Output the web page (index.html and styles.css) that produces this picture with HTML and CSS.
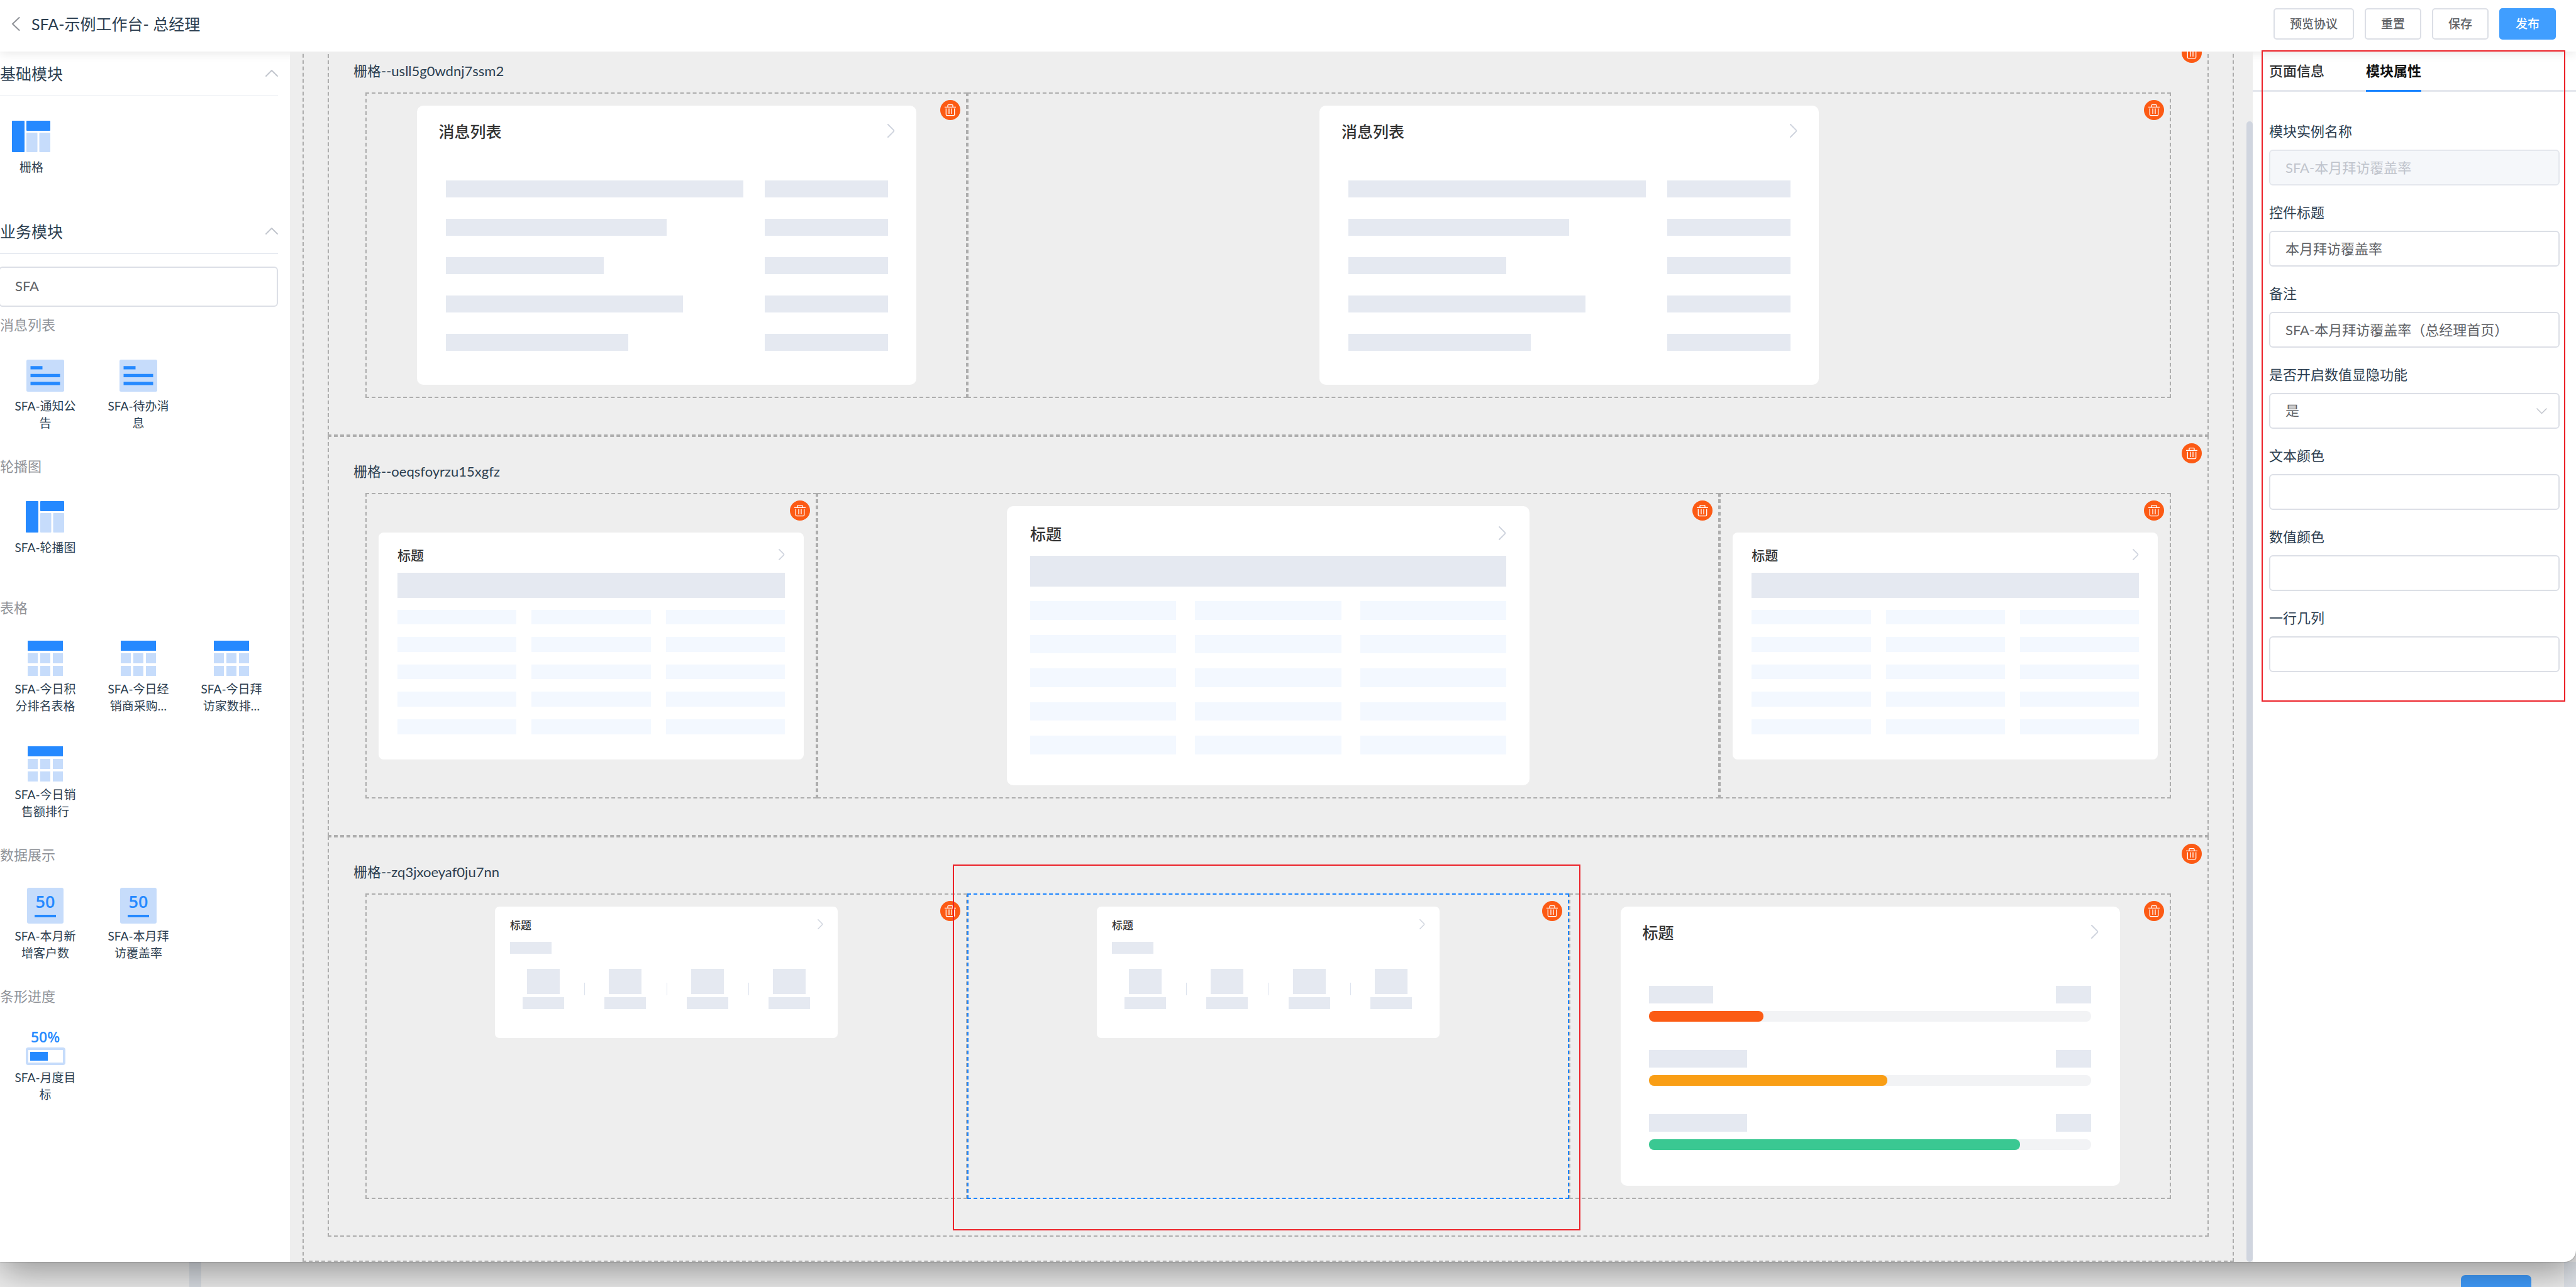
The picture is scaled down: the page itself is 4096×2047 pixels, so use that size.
FILE: index.html
```html
<!DOCTYPE html>
<html lang="zh-CN">
<head>
<meta charset="utf-8">
<title>SFA-示例工作台- 总经理</title>
<link rel="stylesheet" href="styles.css">
</head>
<body>
<svg class="sprite" aria-hidden="true">
  <symbol id="i-trash" viewBox="0 0 20 20"><path d="M1 5.300h18M6 5V2.600a1 1 0 0 1 1-1h6a1 1 0 0 1 1 1V5M3.300 7.500v9.600a1.600 1.600 0 0 0 1.600 1.600h10.200a1.600 1.600 0 0 0 1.600-1.600V7.500M8 7.500v8.500M12 7.500v8.500" fill="none" stroke="#fff" stroke-width="1.300"/></symbol>
  <symbol id="i-next" viewBox="0 0 12 22"><path d="M1 1l8.600 8.600a2 2 0 0 1 0 2.800L1 21" fill="none" stroke="#cfd4de" stroke-width="2" stroke-linecap="round"/></symbol>
  <symbol id="i-up" viewBox="0 0 20 12"><path d="M1 11l9-9 9 9" fill="none" stroke="#c0c4cc" stroke-width="1.800" stroke-linecap="round" stroke-linejoin="round"/></symbol>
  <symbol id="i-grid" viewBox="0 0 62 50"><rect width="20" height="50" rx="1" fill="#2589ff"/><rect x="23" width="38" height="16" rx="1" fill="#2589ff"/><rect x="23" y="19" width="17.500" height="31" rx="1" fill="#c6dcfb"/><rect x="43.500" y="19" width="17.500" height="31" rx="1" fill="#c6dcfb"/></symbol>
  <symbol id="i-list" viewBox="0 0 60 51"><rect width="60" height="51" rx="2.500" fill="#c6dcfb"/><path d="M6.500 12.800h19M6.500 25.300h47M6.500 37.800h47" stroke="#2589ff" stroke-width="5.200"/></symbol>
  <symbol id="i-table" viewBox="0 0 56 56"><path d="M0 0h56v16H0z" fill="#2589ff"/><path d="M0 20h16v16H0zM20 20h16v16H20zM40 20h16v16H40zM0 40h16v16H0zM20 40h16v16H20zM40 40h16v16H40z" fill="#c6dcfb"/></symbol>
</svg>

<div class="app">
  <header class="topbar">
    <button class="back" aria-label="返回"><svg width="14" height="22" viewBox="0 0 14 22"><path d="M12.500 1L2 11l10.500 10" fill="none" stroke="#909399" stroke-width="2" stroke-linecap="round"/></svg></button>
    <h1 class="title">SFA-示例工作台- 总经理</h1>
    <div class="actions">
      <button class="btn">预览协议</button>
      <button class="btn">重置</button>
      <button class="btn">保存</button>
      <button class="btn primary">发布</button>
    </div>
  </header>

  <div class="workspace">
    <aside class="palette">
      <section class="section">
        <h2 class="section-title">基础模块<svg width="20" height="12"><use href="#i-up"/></svg></h2>
        <ul class="widgets base">
          <li class="widget"><span class="thumb"><svg width="62" height="50"><use href="#i-grid"/></svg></span><span class="name">栅格</span></li>
        </ul>
      </section>
      <section class="section">
        <h2 class="section-title">业务模块<svg width="20" height="12"><use href="#i-up"/></svg></h2>
        <input class="input search" type="text" value="SFA" aria-label="搜索模块">
        <h3 class="group">消息列表</h3>
        <ul class="widgets">
          <li class="widget"><span class="thumb"><svg width="60" height="51"><use href="#i-list"/></svg></span><span class="name">SFA-通知公告</span></li>
          <li class="widget"><span class="thumb"><svg width="60" height="51"><use href="#i-list"/></svg></span><span class="name">SFA-待办消息</span></li>
        </ul>
        <h3 class="group">轮播图</h3>
        <ul class="widgets">
          <li class="widget"><span class="thumb"><svg width="62" height="50"><use href="#i-grid"/></svg></span><span class="name">SFA-轮播图</span></li>
        </ul>
        <h3 class="group">表格</h3>
        <ul class="widgets">
          <li class="widget"><span class="thumb"><svg width="56" height="56"><use href="#i-table"/></svg></span><span class="name">SFA-今日积分排名表格</span></li>
          <li class="widget"><span class="thumb"><svg width="56" height="56"><use href="#i-table"/></svg></span><span class="name">SFA-今日经销商采购…</span></li>
          <li class="widget"><span class="thumb"><svg width="56" height="56"><use href="#i-table"/></svg></span><span class="name">SFA-今日拜访家数排…</span></li>
          <li class="widget"><span class="thumb"><svg width="56" height="56"><use href="#i-table"/></svg></span><span class="name">SFA-今日销售额排行</span></li>
        </ul>
        <h3 class="group">数据展示</h3>
        <ul class="widgets">
          <li class="widget"><span class="thumb"><span class="num">50</span></span><span class="name">SFA-本月新增客户数</span></li>
          <li class="widget"><span class="thumb"><span class="num">50</span></span><span class="name">SFA-本月拜访覆盖率</span></li>
        </ul>
        <h3 class="group">条形进度</h3>
        <ul class="widgets">
          <li class="widget"><span class="thumb"><span class="pct">50%<span class="pct-bar"></span></span></span><span class="name">SFA-月度目标</span></li>
        </ul>
      </section>
    </aside>

    <main class="canvas">
      <div class="page">
        <section class="row">
          <button class="del" aria-label="删除"><svg width="20" height="20"><use href="#i-trash"/></svg></button>
          <h2 class="row-name">栅格--usll5g0wdnj7ssm2</h2>
          <div class="cols one-two">
            <div class="cell">
              <button class="del" aria-label="删除"><svg width="20" height="20"><use href="#i-trash"/></svg></button>
              <article class="card">
                <h3 class="card-head">消息列表<svg width="12" height="22"><use href="#i-next"/></svg></h3>
                <div class="lines">
                  <div class="line"><i style="width:473px"></i><i class="end"></i></div>
                  <div class="line"><i style="width:351px"></i><i class="end"></i></div>
                  <div class="line"><i style="width:251px"></i><i class="end"></i></div>
                  <div class="line"><i style="width:377px"></i><i class="end"></i></div>
                  <div class="line"><i style="width:290px"></i><i class="end"></i></div>
                </div>
              </article>
            </div>
            <div class="cell">
              <button class="del" aria-label="删除"><svg width="20" height="20"><use href="#i-trash"/></svg></button>
              <article class="card">
                <h3 class="card-head">消息列表<svg width="12" height="22"><use href="#i-next"/></svg></h3>
                <div class="lines">
                  <div class="line"><i style="width:473px"></i><i class="end"></i></div>
                  <div class="line"><i style="width:351px"></i><i class="end"></i></div>
                  <div class="line"><i style="width:251px"></i><i class="end"></i></div>
                  <div class="line"><i style="width:377px"></i><i class="end"></i></div>
                  <div class="line"><i style="width:290px"></i><i class="end"></i></div>
                </div>
              </article>
            </div>
          </div>
        </section>

        <section class="row">
          <button class="del" aria-label="删除"><svg width="20" height="20"><use href="#i-trash"/></svg></button>
          <h2 class="row-name">栅格--oeqsfoyrzu15xgfz</h2>
          <div class="cols wide-mid">
            <div class="cell">
              <button class="del" aria-label="删除"><svg width="20" height="20"><use href="#i-trash"/></svg></button>
              <article class="card table-card small">
                <h3 class="card-head">标题<svg width="10" height="18"><use href="#i-next"/></svg></h3>
                <div class="thead"></div>
                <div class="tbody"><i></i><i></i><i></i><i></i><i></i><i></i><i></i><i></i><i></i><i></i><i></i><i></i><i></i><i></i><i></i></div>
              </article>
            </div>
            <div class="cell">
              <button class="del" aria-label="删除"><svg width="20" height="20"><use href="#i-trash"/></svg></button>
              <article class="card table-card">
                <h3 class="card-head">标题<svg width="12" height="22"><use href="#i-next"/></svg></h3>
                <div class="thead"></div>
                <div class="tbody"><i></i><i></i><i></i><i></i><i></i><i></i><i></i><i></i><i></i><i></i><i></i><i></i><i></i><i></i><i></i></div>
              </article>
            </div>
            <div class="cell">
              <button class="del" aria-label="删除"><svg width="20" height="20"><use href="#i-trash"/></svg></button>
              <article class="card table-card small">
                <h3 class="card-head">标题<svg width="10" height="18"><use href="#i-next"/></svg></h3>
                <div class="thead"></div>
                <div class="tbody"><i></i><i></i><i></i><i></i><i></i><i></i><i></i><i></i><i></i><i></i><i></i><i></i><i></i><i></i><i></i></div>
              </article>
            </div>
          </div>
        </section>

        <section class="row">
          <button class="del" aria-label="删除"><svg width="20" height="20"><use href="#i-trash"/></svg></button>
          <h2 class="row-name">栅格--zq3jxoeyaf0ju7nn</h2>
          <div class="cols thirds">
            <div class="cell top">
              <button class="del" aria-label="删除"><svg width="20" height="20"><use href="#i-trash"/></svg></button>
              <article class="card num-card">
                <h3 class="card-head">标题<svg width="9" height="16"><use href="#i-next"/></svg></h3>
                <div class="tag"></div>
                <div class="stats"><div class="stat"></div><div class="stat"></div><div class="stat"></div><div class="stat"></div></div>
              </article>
            </div>
            <div class="cell top selected">
              <button class="del" aria-label="删除"><svg width="20" height="20"><use href="#i-trash"/></svg></button>
              <article class="card num-card">
                <h3 class="card-head">标题<svg width="9" height="16"><use href="#i-next"/></svg></h3>
                <div class="tag"></div>
                <div class="stats"><div class="stat"></div><div class="stat"></div><div class="stat"></div><div class="stat"></div></div>
              </article>
              <div class="mark mark-cell"></div>
            </div>
            <div class="cell">
              <button class="del" aria-label="删除"><svg width="20" height="20"><use href="#i-trash"/></svg></button>
              <article class="card">
                <h3 class="card-head">标题<svg width="12" height="22"><use href="#i-next"/></svg></h3>
                <div class="bars">
                  <div class="bar"><i style="width:102px"></i><i class="val"></i><div class="track"><b class="red" style="width:26%"></b></div></div>
                  <div class="bar"><i style="width:156px"></i><i class="val"></i><div class="track"><b class="amber" style="width:54%"></b></div></div>
                  <div class="bar"><i style="width:156px"></i><i class="val"></i><div class="track"><b class="green" style="width:84%"></b></div></div>
                </div>
              </article>
            </div>
          </div>
        </section>
      </div>
      <div class="scroll-thumb"></div>
    </main>

    <aside class="props">
      <nav class="tabs">
        <a class="tab" href="#page">页面信息</a>
        <a class="tab active" href="#module">模块属性</a>
      </nav>
      <form class="form">
        <div class="field"><label for="f1">模块实例名称</label><input class="input" id="f1" type="text" value="SFA-本月拜访覆盖率" disabled></div>
        <div class="field"><label for="f2">控件标题</label><input class="input" id="f2" type="text" value="本月拜访覆盖率"></div>
        <div class="field"><label for="f3">备注</label><input class="input" id="f3" type="text" value="SFA-本月拜访覆盖率（总经理首页）"></div>
        <div class="field"><label for="f4">是否开启数值显隐功能</label><div class="select"><select class="input" id="f4"><option>是</option><option>否</option></select><svg width="17" height="10" viewBox="0 0 17 10"><path d="M1 1l7.500 7.500L16 1" fill="none" stroke="#c0c4cc" stroke-width="1.500" stroke-linecap="round"/></svg></div></div>
        <div class="field"><label for="f5">文本颜色</label><input class="input" id="f5" type="text"></div>
        <div class="field"><label for="f6">数值颜色</label><input class="input" id="f6" type="text"></div>
        <div class="field"><label for="f7">一行几列</label><input class="input" id="f7" type="text"></div>
      </form>
      <div class="mark mark-form"></div>
    </aside>
  </div>
</div>

<div class="behind"><span class="gutter"></span><button class="behind-btn" aria-label="确定"></button><span class="edge"></span></div>
</body>
</html>
```
FILE: styles.css
```css
* { box-sizing: border-box; }
body {
  margin: 0;
  height: 100vh;
  display: flex;
  flex-direction: column;
  overflow: hidden;
  background: #eee;
  color: #2c3e50;
  font-family: Lato, "Noto Sans CJK SC", sans-serif;
  font-size: 22px;
}
h1, h2, h3, ul { margin: 0; padding: 0; font-weight: 400; list-style: none; }
button { font-family: inherit; padding: 0; border: 0; background: none; }
svg { display: block; }
i, b { display: block; }
.sprite { position: absolute; width: 0; height: 0; }

.app {
  position: relative;
  z-index: 1;
  flex: 1;
  min-height: 0;
  display: flex;
  flex-direction: column;
  background: #fff;
  border-radius: 0 0 18px 0;
  box-shadow: 0 15px 60px rgba(0, 0, 0, .4), 0 0 2px rgba(0, 0, 0, .5);
}

/* top bar */
.topbar {
  position: relative;
  z-index: 1;
  flex: none;
  height: 82px;
  display: flex;
  align-items: center;
  padding: 0 32px 6px 18px;
  background: #fff;
  box-shadow: 0 2px 16px rgba(0, 0, 0, .1);
}
.back { margin-right: 18px; }
.title { font-size: 25px; line-height: 36px; }
.actions { margin-left: auto; display: flex; gap: 17px; }
.btn {
  height: 50px;
  padding: 0 24px;
  border: 2px solid #dcdfe6;
  border-radius: 5px;
  background: #fff;
  color: #606266;
  font-size: 19px;
  font-weight: 500;
  line-height: 24px;
}
.btn.primary { background: #409eff; border-color: #409eff; color: #fff; }

.workspace { flex: 1; min-height: 0; display: flex; }

/* left palette */
.palette { flex: none; width: 461px; padding-right: 19px; overflow: hidden; }
.section { margin-left: -2px; }
.section-title {
  height: 71px;
  display: flex;
  align-items: center;
  justify-content: space-between;
  padding: 0 0 3px 2px;
  border-bottom: 1px solid #dfe4ed;
  font-size: 25px;
}
.widgets { display: flex; flex-wrap: wrap; margin-bottom: 21px; }
.widget {
  width: 104px;
  height: 168px;
  margin: 0 22px;
  padding-top: 32px;
  text-align: center;
}
.base { margin-bottom: 10px; padding-top: 2px; }
.base .widget { margin: 0; }
.thumb { height: 60px; display: flex; align-items: center; justify-content: center; }
.name { display: block; margin-top: 5px; font-size: 19px; line-height: 27px; }
.group { padding-left: 2px; color: #909399; font-size: 22px; line-height: 36px; }
.num {
  width: 58px;
  height: 57px;
  display: flex;
  flex-direction: column;
  align-items: center;
  padding-top: 6px;
  border-radius: 3px;
  background: #c6dcfb;
  color: #2589ff;
  font: 600 27px/31px "Open Sans", sans-serif;
}
.num::after { content: ""; width: 34px; height: 4px; margin-top: 6px; background: #2589ff; }
.pct { color: #2589ff; font: 600 23px/24px "Open Sans", sans-serif; }
.pct-bar {
  display: block;
  width: 63px;
  height: 28px;
  margin-top: 5px;
  padding: 3px;
  border: 4px solid #c6dcfb;
  border-radius: 4px;
}
.pct-bar::before { content: ""; display: block; width: 28px; height: 14px; background: #2589ff; }

.input {
  display: block;
  width: 100%;
  height: 57px;
  padding: 0 24px 3px;
  border: 2px solid #dcdfe6;
  border-radius: 6px;
  background: #fff;
  color: #606266;
  font-family: inherit;
  font-size: 22px;
}
.input:disabled { background: #f5f7fa; border-color: #e4e7ed; color: #c0c4cc; }
.search { height: 64px; margin: 20px 0 11px; }

/* canvas */
.canvas {
  position: relative;
  z-index: 2;
  flex: 1;
  min-width: 0;
  display: flex;
  flex-direction: column;
  justify-content: flex-end;
  padding: 0 30px 0 20px;
  overflow: hidden;
  background: #eee;
}
.scroll-thumb { position: absolute; top: 111px; right: 0; bottom: 0; width: 10px; border-radius: 5px; background: #d0d5df; }
.page { flex: none; padding: 38px; border: 2px dashed #adadad; }
.row { position: relative; padding: 39px 58px 58px; border: 2px dashed #adadad; }
.row-name { margin: 0 0 18px -19px; font-size: 22px; line-height: 32px; }
.cols { display: grid; }
.one-two { grid-template-columns: 1fr 2fr; }
.wide-mid { grid-template-columns: 1fr 2fr 1fr; }
.thirds { grid-template-columns: 1fr 1fr 1fr; }
.cell {
  position: relative;
  min-width: 0;
  min-height: 486px;
  display: flex;
  align-items: center;
  justify-content: center;
  padding: 19px;
  border: 2px dashed #adadad;
}
.cell.top { align-items: flex-start; }
.cell.selected { border-color: #1a84ff; }
.del {
  position: absolute;
  z-index: 1;
  top: 10px;
  right: 9px;
  width: 32px;
  height: 32px;
  display: flex;
  align-items: center;
  justify-content: center;
  border-radius: 50%;
  background: #fc5a14;
}

/* module cards */
.card { width: 794px; height: 444px; border-radius: 10px; background: #fff; }
.card i { background: #e5e9f1; }
.card-head {
  height: 82px;
  display: flex;
  align-items: center;
  justify-content: space-between;
  padding: 0 34px 2px 35px;
  color: #333;
  font-size: 25px;
  font-weight: 500;
}
.lines { display: grid; gap: 34px; padding: 37px 45px 0 46px; }
.line { display: flex; justify-content: space-between; height: 27px; }
.end { width: 196px; }

.table-card { width: 831px; padding: 0 37px; }
.table-card .card-head { height: 79px; padding: 6px 0 0; }
.thead { height: 49px; background: #e5e9f1; }
.tbody {
  height: 244px;
  margin-top: 23px;
  display: grid;
  grid-template-columns: repeat(3, 1fr);
  grid-auto-rows: 1fr;
  gap: 24px 30px;
}
.card .tbody i { background: #f3f8ff; }
.small { width: 676px; height: 361px; padding: 0 30px; border-radius: 8px; }
.small .card-head { height: 64px; font-size: 21px; }
.small .thead { height: 40px; }
.small .tbody { height: 198px; margin-top: 19px; gap: 20px 24px; }

.num-card { width: 545px; height: 209px; border-radius: 7px; }
.num-card .card-head { height: 56px; padding: 0 23px 0 24px; font-size: 17px; }
.tag { width: 66px; height: 19px; margin: 0 0 24px 24px; background: #e5e9f1; }
.stats { display: grid; grid-template-columns: repeat(4, 1fr); padding: 0 12px; }
.stat { position: relative; display: grid; justify-items: center; gap: 5px; }
.stat::before { content: ""; width: 52px; height: 40px; background: #e5e9f1; }
.stat::after { content: ""; width: 66px; height: 19px; background: #e5e9f1; }
.stat + .stat {
  background: linear-gradient(#dde3ee, #dde3ee) 0 22px / 1px 20px no-repeat;
}

.bars { display: grid; gap: 45px; padding: 44px 46px 0 45px; }
.bar { display: flex; flex-wrap: wrap; justify-content: space-between; gap: 12px 0; }
.bar i { height: 28px; }
.val { width: 56px; }
.track { width: 100%; height: 17px; border-radius: 8px; background: #f2f3f5; }
.track b { height: 17px; border-radius: 8px; }
.red { background: #fb5b14; }
.amber { background: #f99e15; }
.green { background: #3ac892; }

/* right panel */
.props { position: relative; flex: none; width: 514px; }
.tabs {
  height: 64px;
  display: flex;
  gap: 66px;
  padding-left: 26px;
  border-bottom: 3px solid #e4e7ed;
}
.tab {
  height: 64px;
  border-bottom: 3px solid transparent;
  color: #303133;
  font-size: 22px;
  font-weight: 500;
  line-height: 61px;
  text-decoration: none;
}
.tab.active { border-color: #1a84ff; color: #111; font-weight: 700; }
.form { display: grid; gap: 28px; padding: 48px 26px 0; }
.field label { display: block; margin-bottom: 14px; line-height: 30px; }
.select { position: relative; }
.select select { appearance: none; }
.select svg { position: absolute; right: 20px; top: 24px; pointer-events: none; }

/* review outlines */
.mark { position: absolute; z-index: 3; border: 2px solid #ec2027; pointer-events: none; }
.mark-cell { inset: -48px -20px -52px -25px; }
.mark-form { top: -2px; left: 14px; right: 17px; height: 1036px; }

/* page underneath the window */
.behind { flex: none; height: 40px; display: flex; align-items: flex-end; }
.gutter { width: 19px; height: 40px; margin-left: 301px; background: #dadee4; }
.behind-btn { width: 112px; height: 19px; margin: 0 52px 0 auto; border-radius: 7px 7px 0 0; background: #409eff; }
.edge { width: 19px; height: 40px; background: #dfe3e9; }
```
